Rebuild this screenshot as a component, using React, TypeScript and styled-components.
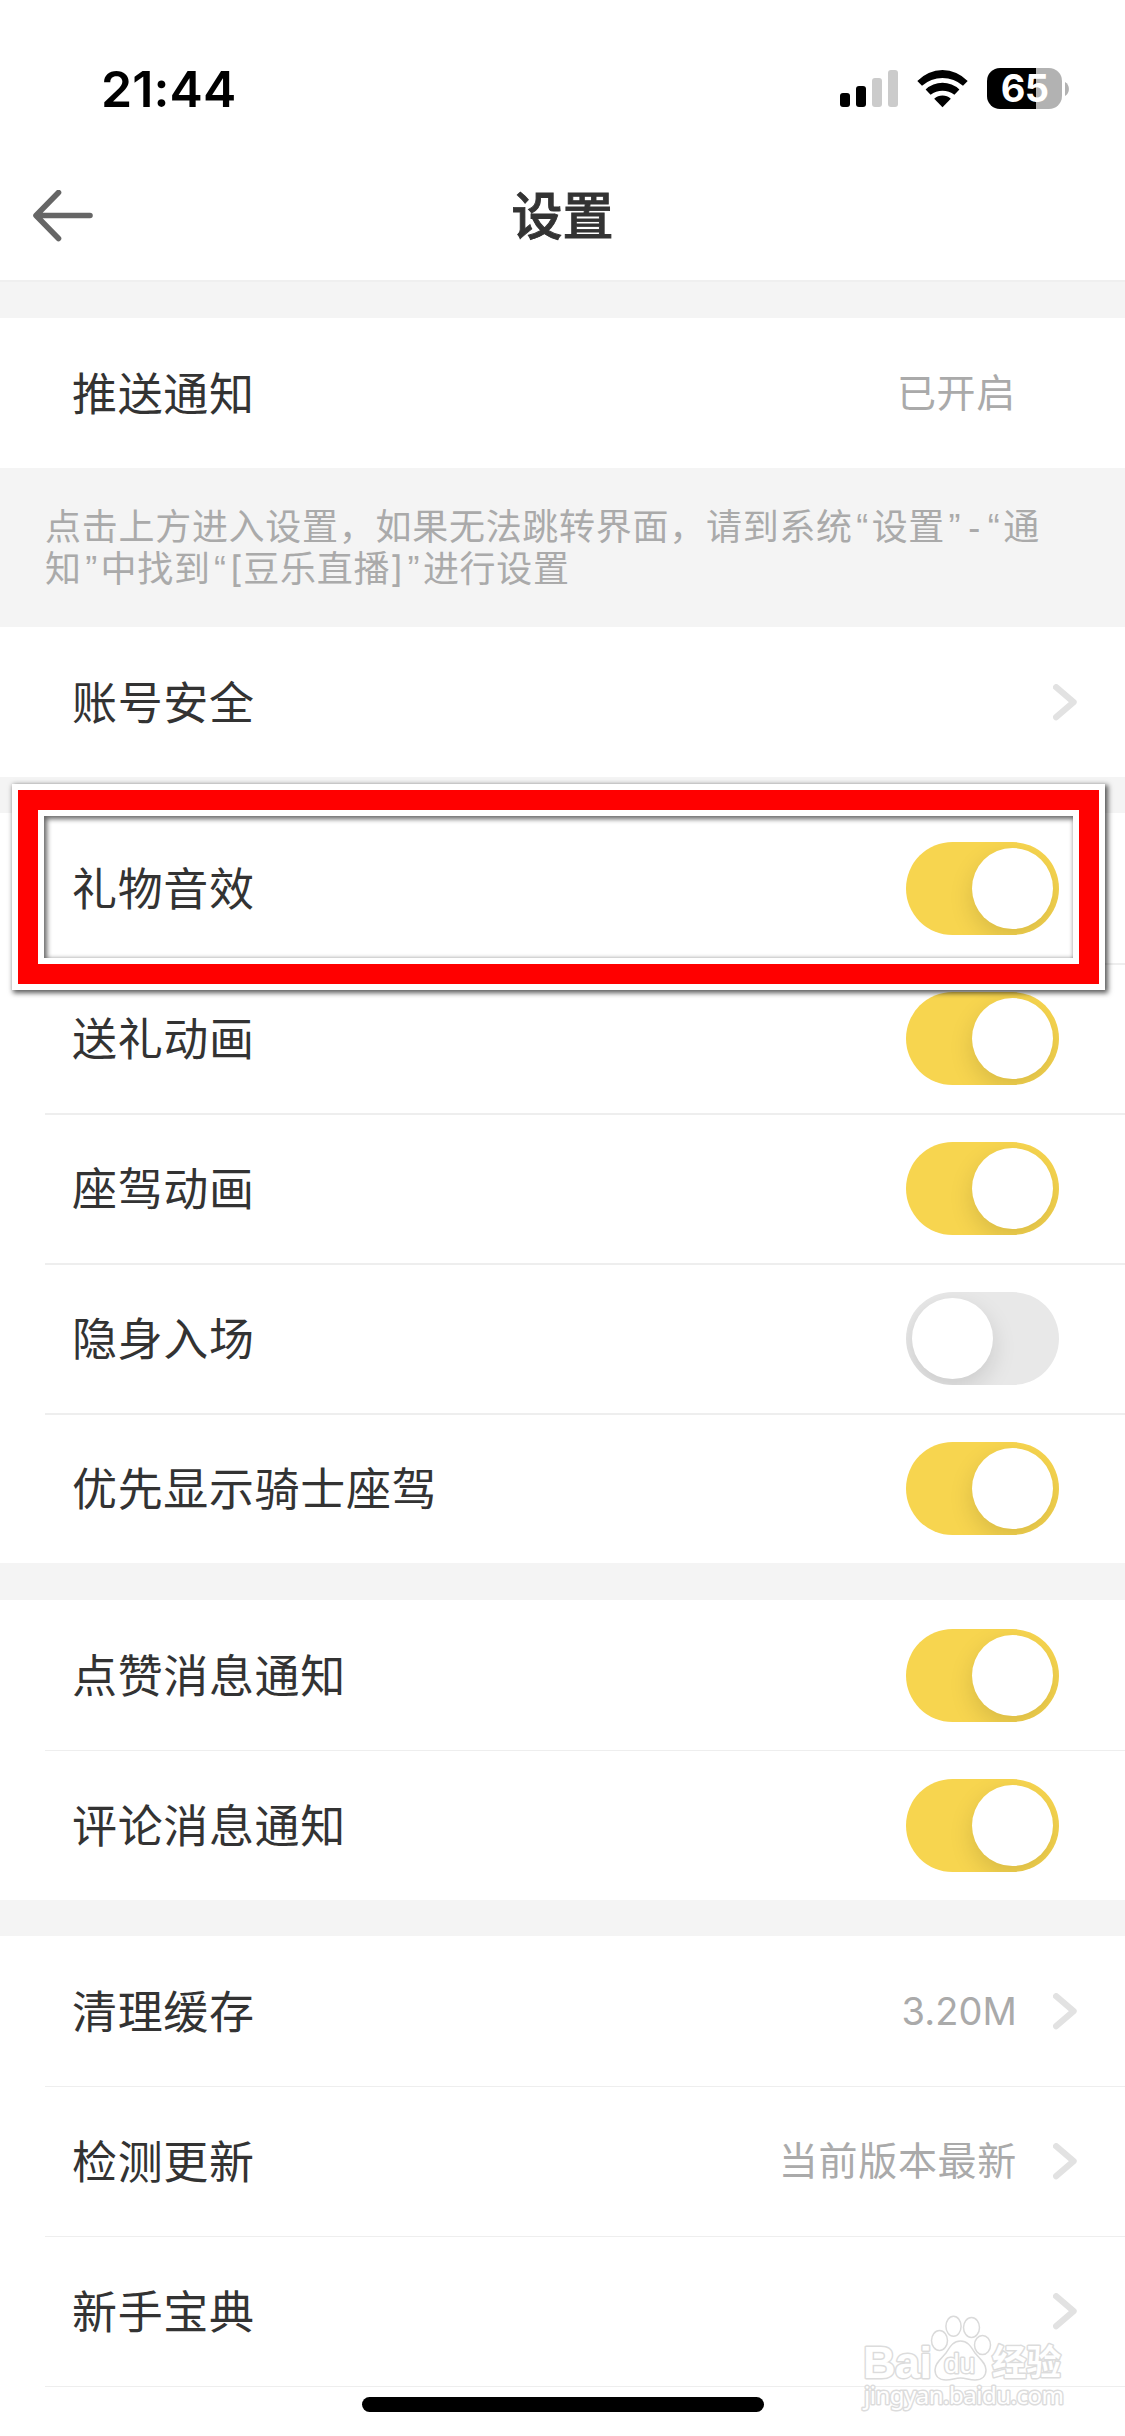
import React from "react";
import styled, { createGlobalStyle } from "styled-components";

const Global = createGlobalStyle`
  html, body { margin: 0; padding: 0; background: #fff; }
  * { box-sizing: border-box; }
`;

const cjk = `"Inter", "Noto Sans CJK SC", sans-serif`;

const Screen = styled.main`
  position: relative;
  width: 1125px;
  height: 2436px;
  overflow: hidden;
  background: #fff;
  font-family: ${cjk};
  color: #333;
`;

const StatusBar = styled.div`
  display: flex;
  justify-content: space-between;
  align-items: center;
  height: 132px;
  padding: 45px 56px 0 101px;
`;

const Clock = styled.span`
  font-size: 50px;
  font-weight: 600;
  line-height: 60px;
  letter-spacing: 0.1px;
  color: #000;
`;

const StatusIcons = styled.div`
  display: flex;
  align-items: center;
`;

const SignalBars = styled.div`
  display: flex;
  align-items: flex-end;
  gap: 6px;
  margin-right: 19px;
`;

const Bar = styled.i<{ $h: number; $on: boolean }>`
  width: 10px;
  height: ${(p) => p.$h}px;
  border-radius: 3px;
  background: ${(p) => (p.$on ? "#000" : "#cbcbcb")};
`;

const Battery = styled.div`
  display: flex;
  justify-content: center;
  align-items: center;
  width: 75px;
  height: 41px;
  margin-left: 19px;
  border-radius: 13px;
  background: linear-gradient(90deg, #000 0 49px, #b2b2b2 49px);
  color: #fff;
  font-size: 38px;
  font-weight: 700;
  line-height: 41px;
  letter-spacing: -0.8px;
`;

const Nub = styled.svg`
  margin-left: 3px;
`;

const NavBar = styled.header`
  display: grid;
  grid-template-columns: 1fr auto 1fr;
  align-items: center;
  height: 150px;
  padding: 20px 33px 0;
  border-bottom: 2px solid #efefef;
`;

const Title = styled.h1`
  margin: 0;
  padding-top: 2px;
  font-size: 51px;
  font-weight: 500;
  line-height: 60px;
  -webkit-text-stroke: 0.9px #333;
`;

const Gap = styled.div<{ $h: number }>`
  height: ${(p) => p.$h}px;
  background: #f4f4f4;
`;

const Hint = styled.p`
  height: 159px;
  margin: 0;
  padding: 38px 0 0 45px;
  background: #f4f4f4;
  color: #aaa;
  font-size: 36px;
  line-height: 42px;
  letter-spacing: 0.72px;
  white-space: nowrap;
`;

const Mark = styled.span<{ $w: number }>`
  display: inline-block;
  width: ${(p) => p.$w}px;
  font-family: "Liberation Sans", sans-serif;
  line-height: 36px;
  letter-spacing: 0;
  text-align: center;
`;

const Row = styled.div<{ $line?: number }>`
  display: flex;
  align-items: center;
  height: 150px;
  margin-left: 45px;
  padding: 0 48px 0 27px;
  box-shadow: inset 0 ${(p) => p.$line ?? 0}px #eee;
`;

const Label = styled.span`
  flex: 1;
  padding-top: 3px;
  font-size: 45px;
  line-height: 60px;
  letter-spacing: 0.65px;
`;

const Value = styled.span<{ $end: number; $latin?: boolean }>`
  margin-right: ${(p) => p.$end}px;
  color: #aaa;
  font-size: ${(p) => (p.$latin ? 38 : 39)}px;
  line-height: 60px;
  letter-spacing: ${(p) => (p.$latin ? 0.1 : 0.7)}px;
`;

const Track = styled.div<{ $on: boolean }>`
  display: flex;
  justify-content: ${(p) => (p.$on ? "flex-end" : "flex-start")};
  width: 153px;
  height: 93px;
  margin-right: 18px;
  padding: 6px;
  border-radius: 47px;
  overflow: hidden;
  background: ${(p) => (p.$on ? "#f7d54f" : "#e8e8e8")};
`;

const Knob = styled.i`
  width: 81px;
  height: 81px;
  border-radius: 50%;
  background: #fff;
  box-shadow: 0 9px 24px rgba(0, 0, 0, 0.13);
`;

const HighlightOuter = styled.div`
  position: absolute;
  left: 12px;
  top: 784px;
  width: 1093px;
  height: 206px;
  border: 6px solid #fff;
  box-shadow: 2px 2px 5px 1px rgba(0, 0, 0, 0.65);
`;

const HighlightRed = styled.div`
  height: 100%;
  border: 20px solid #f00;
`;

const HighlightInner = styled.div`
  height: 100%;
  border: 6px solid #fff;
`;

const HighlightShade = styled.div`
  height: 100%;
  box-shadow: inset 2px 2px 5px 1px rgba(0, 0, 0, 0.6);
`;

const HomeIndicator = styled.div`
  position: absolute;
  left: 362px;
  bottom: 24px;
  width: 402px;
  height: 15px;
  border-radius: 8px;
  background: #000;
`;

const Watermark = styled.svg`
  position: absolute;
  left: 855px;
  top: 2305px;
  text {
    paint-order: stroke;
    fill: #fff;
    stroke: #dcdcdc;
    stroke-width: 3px;
    stroke-linejoin: round;
  }
`;

const BackArrow = () => (
  <svg width="60" height="52" viewBox="0 0 60 52" fill="none" stroke="#666" strokeWidth="5.6" strokeLinecap="round" strokeLinejoin="round">
    <path d="M25.5 2.5L3 25.5L25.5 48.5M4 25.5H57" />
  </svg>
);

const Chevron = () => (
  <svg width="24" height="37" viewBox="0 0 24 37" fill="none" stroke="#e2e2e2" strokeWidth="6.2" strokeLinecap="round" strokeLinejoin="round">
    <path d="M3.1 3.2L20.6 18.2L3.1 33.2" />
  </svg>
);

const Wifi = () => (
  <svg width="51" height="38" viewBox="0 0 51 38">
    <path d="M0.3 11A34.4 34.4 0 0 1 50.7 11L46 15.7A31 31 0 0 0 5 15.7Z" />
    <path d="M8.6 19.4A25 25 0 0 1 42.4 19.4L37.4 24.8A19.7 19.7 0 0 0 13.6 24.8Z" />
    <path d="M17.2 28.8A12.4 12.4 0 0 1 33.8 28.8L25.5 37.2Z" />
  </svg>
);

const BatteryNub = () => (
  <Nub width="4" height="14" viewBox="0 0 4 14">
    <path d="M0 0C5.2 2.5 5.2 11.5 0 14Z" fill="#b2b2b2" />
  </Nub>
);

const Switch = ({ on }: { on: boolean }) => (
  <Track $on={on} role="switch" aria-checked={on}>
    <Knob />
  </Track>
);

const Highlight = () => (
  <HighlightOuter>
    <HighlightRed>
      <HighlightInner>
        <HighlightShade />
      </HighlightInner>
    </HighlightRed>
  </HighlightOuter>
);

const Open = () => <Mark $w={18.8}>“</Mark>;
const Close = () => <Mark $w={18.8}>”</Mark>;

const effects = [
  { label: "礼物音效", on: true },
  { label: "送礼动画", on: true },
  { label: "座驾动画", on: true },
  { label: "隐身入场", on: false },
  { label: "优先显示骑士座驾", on: true },
];

const notices = ["点赞消息通知", "评论消息通知"];

const tools = [
  { label: "清理缓存", value: "3.20M", latin: true },
  { label: "检测更新", value: "当前版本最新", latin: false },
  { label: "新手宝典", value: "", latin: false },
];

export default function App() {
  return (
    <Screen>
      <Global />
      <StatusBar>
        <Clock>21:44</Clock>
        <StatusIcons>
          <SignalBars>
            <Bar $h={14} $on />
            <Bar $h={21} $on />
            <Bar $h={29} $on={false} />
            <Bar $h={37} $on={false} />
          </SignalBars>
          <Wifi />
          <Battery>65</Battery>
          <BatteryNub />
        </StatusIcons>
      </StatusBar>
      <NavBar>
        <BackArrow />
        <Title>设置</Title>
      </NavBar>
      <Gap $h={36} />
      <Row>
        <Label>推送通知</Label>
        <Value $end={61}>已开启</Value>
      </Row>
      <Hint>
        点击上方进入设置，如果无法跳转界面，请到系统<Open />设置<Close /><Mark $w={20.5}>-</Mark><Open />通
        <br />
        知<Close />中找到<Open />[豆乐直播]<Close />进行设置
      </Hint>
      <Row>
        <Label>账号安全</Label>
        <Chevron />
      </Row>
      <Gap $h={36} />
      {effects.map((e, i) => (
        <Row key={e.label} $line={i ? 2 : 0}>
          <Label>{e.label}</Label>
          <Switch on={e.on} />
        </Row>
      ))}
      <Gap $h={37} />
      {notices.map((n, i) => (
        <Row key={n} $line={i}>
          <Label>{n}</Label>
          <Switch on />
        </Row>
      ))}
      <Gap $h={36} />
      {tools.map((t, i) => (
        <Row key={t.label} $line={i ? 1 : 0}>
          <Label>{t.label}</Label>
          {t.value && <Value $end={36} $latin={t.latin}>{t.value}</Value>}
          <Chevron />
        </Row>
      ))}
      <Row $line={1} />
      <Highlight />
      <Watermark width="220" height="115" viewBox="0 0 220 115">
        <text x="8" y="73" fontFamily="Liberation Sans" fontWeight="700" fontSize="45" textLength="69">Bai</text>
        <g fill="#fff" stroke="#dadada" strokeWidth="1.5">
          <ellipse cx="84.5" cy="35.5" rx="8" ry="10" />
          <ellipse cx="98.5" cy="21.3" rx="7.6" ry="10" />
          <ellipse cx="116.5" cy="22.5" rx="8" ry="10" />
          <ellipse cx="127.5" cy="40" rx="8" ry="9.6" />
          <path d="M105.5 36C113 36 116 42 120 48C125 54 131 58 131 65C131 71 127 75 120 75C114 75 111 73 105.5 73C100 73 97 75 91 75C84 75 80 71 80 65C80 58 86 54 91 48C95 42 98 36 105.5 36Z" />
        </g>
        <text x="89" y="68" fontFamily="Liberation Sans" fontSize="28" textLength="31">du</text>
        <text x="137" y="70" fontFamily="Noto Sans CJK SC" fontWeight="700" fontSize="35" textLength="69" lengthAdjust="spacingAndGlyphs">经验</text>
        <text x="9" y="99" fontFamily="Noto Sans" fontSize="24" textLength="200">jingyan.baidu.com</text>
      </Watermark>
      <HomeIndicator />
    </Screen>
  );
}
